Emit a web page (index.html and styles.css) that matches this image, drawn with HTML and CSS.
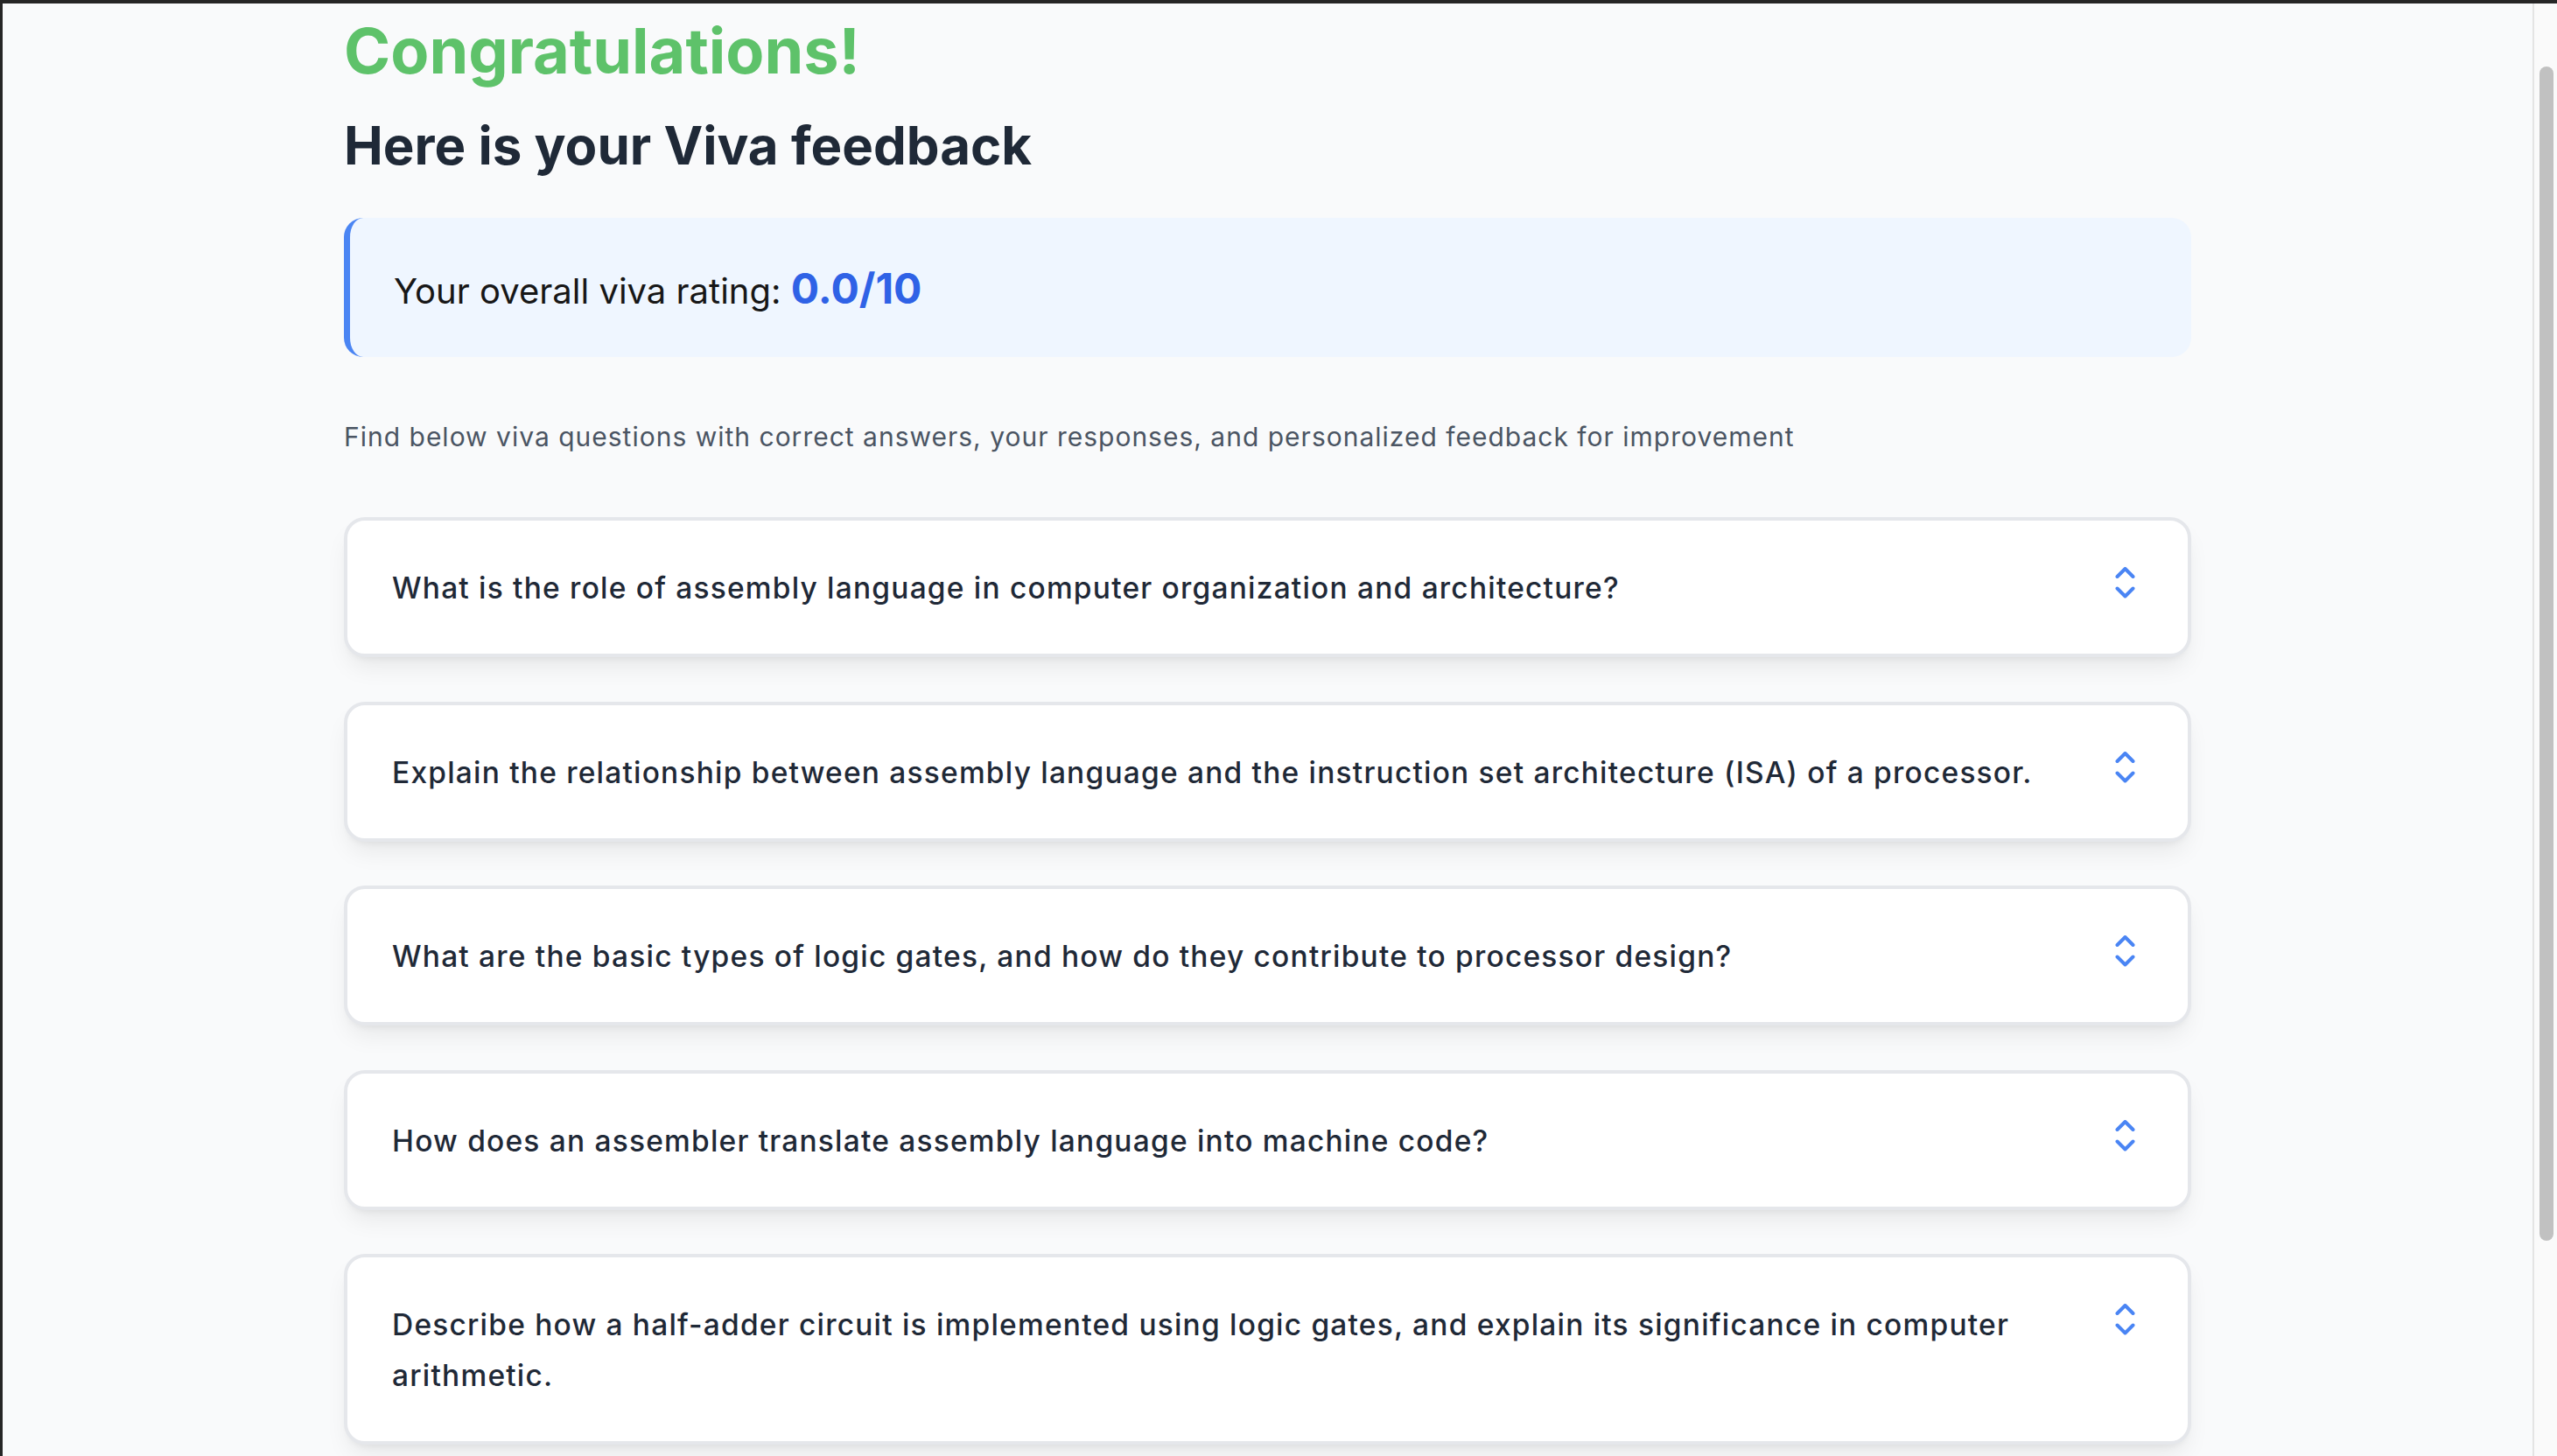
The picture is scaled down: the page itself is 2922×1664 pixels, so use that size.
FILE: index.html
```html
<!DOCTYPE html>
<html lang="en">
<head>
<meta charset="utf-8">
<title>Viva feedback</title>
<link rel="stylesheet" href="styles.css">
</head>
<body>
<div class="frame">
  <main class="viewport">
    <div class="container">
      <h1 class="congrats">Congratulations!</h1>
      <h2 class="subtitle">Here is your Viva feedback</h2>
      <div class="rating">Your overall viva rating: <span class="score">0.0/10</span></div>
      <p class="intro">Find below viva questions with correct answers, your responses, and personalized feedback for improvement</p>
      <div class="questions">
        <div class="card">
          <p class="question">What is the role of assembly language in computer organization and architecture?</p>
          <svg class="chev" viewBox="0 0 24 36" width="24" height="36"><path d="M2.5 11 L11.5 2 L20.5 11 M2.5 24.5 L11.5 33.5 L20.5 24.5"/></svg>
        </div>
        <div class="card">
          <p class="question">Explain the relationship between assembly language and the instruction set architecture (ISA) of a processor.</p>
          <svg class="chev" viewBox="0 0 24 36" width="24" height="36"><path d="M2.5 11 L11.5 2 L20.5 11 M2.5 24.5 L11.5 33.5 L20.5 24.5"/></svg>
        </div>
        <div class="card">
          <p class="question">What are the basic types of logic gates, and how do they contribute to processor design?</p>
          <svg class="chev" viewBox="0 0 24 36" width="24" height="36"><path d="M2.5 11 L11.5 2 L20.5 11 M2.5 24.5 L11.5 33.5 L20.5 24.5"/></svg>
        </div>
        <div class="card">
          <p class="question">How does an assembler translate assembly language into machine code?</p>
          <svg class="chev" viewBox="0 0 24 36" width="24" height="36"><path d="M2.5 11 L11.5 2 L20.5 11 M2.5 24.5 L11.5 33.5 L20.5 24.5"/></svg>
        </div>
        <div class="card">
          <p class="question">Describe how a half-adder circuit is implemented using logic gates, and explain its significance in computer arithmetic.</p>
          <svg class="chev" viewBox="0 0 24 36" width="24" height="36"><path d="M2.5 11 L11.5 2 L20.5 11 M2.5 24.5 L11.5 33.5 L20.5 24.5"/></svg>
        </div>
      </div>
    </div>
  </main>
  <div class="scrollbar"><div class="thumb"></div></div>
</div>
</body>
</html>
```
FILE: styles.css
```css
html, body {
  margin: 0;
  padding: 0;
  height: 100%;
}

body {
  background: #232323;
  overflow: hidden;
  font-family: Inter, "Noto Sans", "Liberation Sans", sans-serif;
}

.frame {
  display: flex;
  height: 1664px;
  box-sizing: border-box;
  border-top: 4px solid #262626;
  border-left: 3px solid #262626;
  background: #f9fafb;
}

.viewport {
  flex: 1;
  min-width: 0;
  overflow: hidden;
}

.container {
  width: 2111px;
  margin: 0 auto;
  padding-top: 11px;
}

.congrats {
  margin: 0;
  font-size: 72px;
  line-height: 86px;
  font-weight: 700;
  color: #5ec26a;
}

.subtitle {
  margin: 29px 0 0;
  font-size: 60px;
  line-height: 72px;
  font-weight: 700;
  color: #1f2937;
}

.rating {
  margin-top: 47px;
  padding: 51px 50px 45px;
  background: #eff6ff;
  border-left: 7px solid #4b85f3;
  border-radius: 22px;
  font-size: 40px;
  line-height: 60px;
  color: #171717;
}

.score {
  font-size: 48px;
  font-weight: 700;
  color: #2f62e6;
}

.intro {
  margin: 69px 0 0;
  font-size: 30px;
  line-height: 45px;
  letter-spacing: 1px;
  color: #4b5563;
}

.questions {
  margin-top: 69px;
  display: flex;
  flex-direction: column;
  gap: 50.5px;
}

.card {
  display: flex;
  align-items: flex-start;
  gap: 24px;
  padding: 48px 59px 46px 51px;
  background: #ffffff;
  border: 4px solid #e5e7eb;
  border-radius: 24px;
  box-shadow: 0 16px 28px -6px rgba(0, 0, 0, 0.08), 0 6px 10px -6px rgba(0, 0, 0, 0.08);
}

.question {
  flex: 1;
  margin: 0;
  font-size: 33.5px;
  line-height: 58px;
  letter-spacing: 1.2px;
  font-weight: 500;
  color: #1f2937;
}

.chev {
  flex: none;
  margin-top: 5px;
  fill: none;
  stroke: #4a85f4;
  stroke-width: 4;
  stroke-linecap: round;
  stroke-linejoin: round;
}

.scrollbar {
  flex: none;
  width: 28px;
  box-sizing: border-box;
  border-left: 2px solid #e4e4e4;
  background: #fafafa;
  padding: 72px 4px 0 6px;
}

.thumb {
  height: 1342px;
  border-radius: 8px;
  background: #c1c1c1;
}
```
